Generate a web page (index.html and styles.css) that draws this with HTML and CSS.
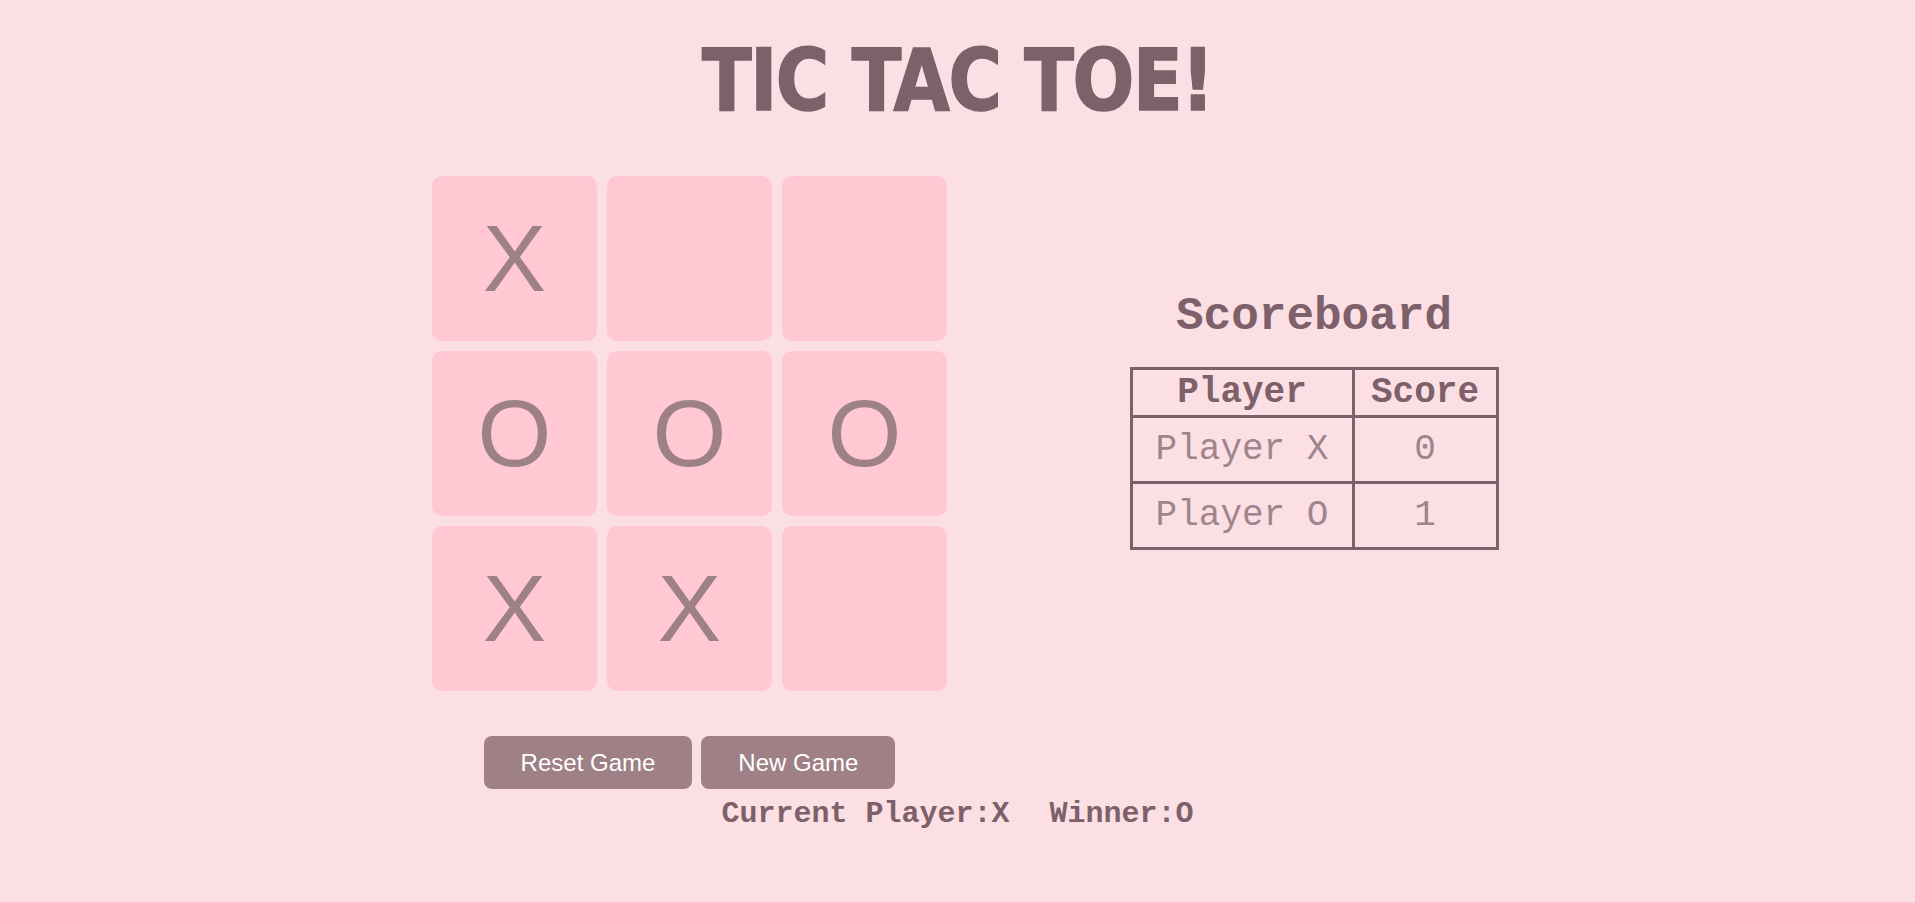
FILE: index.html
```html
<!DOCTYPE html>
<html lang="en">
<head>
<meta charset="utf-8">
<title>Tic Tac Toe</title>
<link rel="stylesheet" href="styles.css">
</head>
<body>
  <h1 class="title">TIC TAC TOE!</h1>
  <main class="game">
    <section class="play">
      <div class="board">
        <div class="cell">X</div>
        <div class="cell"></div>
        <div class="cell"></div>
        <div class="cell">O</div>
        <div class="cell">O</div>
        <div class="cell">O</div>
        <div class="cell">X</div>
        <div class="cell">X</div>
        <div class="cell"></div>
      </div>
      <div class="controls">
        <button class="btn btn-reset">Reset Game</button>
        <button class="btn btn-new">New Game</button>
      </div>
    </section>
    <section class="scoreboard">
      <h2 class="score-title">Scoreboard</h2>
      <table class="score-table">
        <colgroup><col class="col-player"><col class="col-score"></colgroup>
        <thead>
          <tr><th>Player</th><th>Score</th></tr>
        </thead>
        <tbody>
          <tr><td>Player X</td><td>0</td></tr>
          <tr><td>Player O</td><td>1</td></tr>
        </tbody>
      </table>
    </section>
  </main>
  <div class="status">
    <span class="current">Current Player:X</span>
    <span class="winner">Winner:O</span>
  </div>
</body>
</html>
```
FILE: styles.css
```css
html, body {
  margin: 0;
  padding: 0;
}
body {
  background: #fcdfe4;
  color: #7d6069;
  font-family: "Liberation Mono", "Courier New", monospace;
}
.title {
  margin: 37px 0 0;
  height: 86px;
  font-family: "DejaVu Sans Condensed", "DejaVu Sans", sans-serif;
  font-weight: 700;
  font-size: 86px;
  line-height: 86px;
  letter-spacing: -1.5px;
  text-align: center;
  color: #7d6069;
  -webkit-text-stroke: 1.5px #7d6069;
  transform: scaleX(0.94);
}
.game {
  display: flex;
  align-items: flex-start;
  margin: 53px 0 0 432px;
}
.play {
  display: flex;
  flex-direction: column;
  align-items: center;
  width: 515px;
}
.board {
  display: grid;
  grid-template-columns: repeat(3, 165px);
  grid-template-rows: repeat(3, 165px);
  gap: 10px;
}
.cell {
  display: flex;
  align-items: center;
  justify-content: center;
  background: #ffc8d3;
  border-radius: 10px;
  font-family: "Liberation Sans", Arial, sans-serif;
  font-size: 95px;
  color: #9e8087;
}
.controls {
  display: flex;
  gap: 9px;
  margin-top: 45px;
}
.btn {
  border: none;
  border-radius: 8px;
  background: #9e8086;
  color: #ffffff;
  font-family: "Liberation Sans", Arial, sans-serif;
  font-size: 24px;
  line-height: 27px;
  padding: 13px 37px;
}
.scoreboard {
  display: flex;
  flex-direction: column;
  align-items: center;
  width: 366px;
  margin: 118px 0 0 184px;
}
.score-title {
  margin: 0 0 27px;
  font-size: 46px;
  line-height: 46px;
  font-weight: 700;
  color: #7d6069;
}
.score-table {
  border-collapse: collapse;
  table-layout: fixed;
  width: 366px;
  border: 3px solid #7d6069;
}
.col-player { width: 222px; }
.col-score { width: 144px; }
.score-table th,
.score-table td {
  border: 3px solid #7d6069;
  text-align: center;
  font-size: 36px;
  line-height: 40px;
  padding: 0;
}
.score-table th {
  font-weight: 700;
  color: #7d6069;
  height: 45px;
}
.score-table td {
  font-weight: 400;
  color: #a0848b;
  height: 63px;
}
.status {
  display: flex;
  justify-content: center;
  gap: 40px;
  margin-top: 10px;
  font-size: 30px;
  line-height: 30px;
  font-weight: 700;
  color: #7d6069;
}
```
